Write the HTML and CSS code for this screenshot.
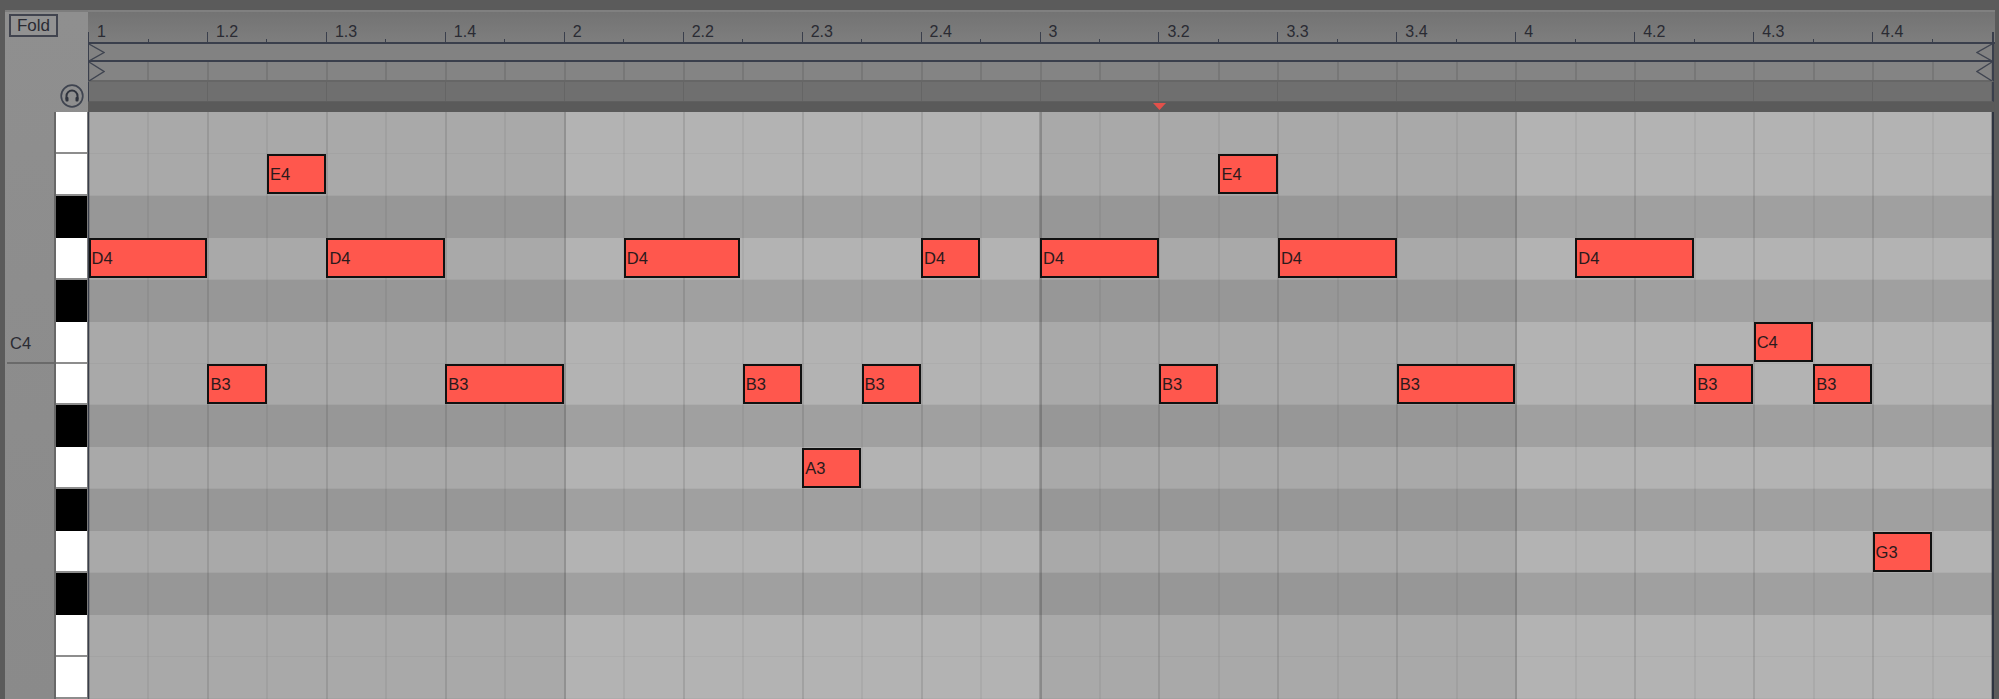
FILE: index.html
```html
<!DOCTYPE html>
<html lang="en">
<head>
<meta charset="utf-8">
<title>MIDI Note Editor</title>
<link rel="stylesheet" href="styles.css">
</head>
<body>
<div class="frame">
  <div class="panel">
    <aside class="side">
      <div class="side-head">
        <button class="fold" type="button">Fold</button>
        <svg class="phones" width="24" height="24" viewBox="0 0 24 24" fill="none" aria-hidden="true">
          <circle cx="12" cy="12" r="10.8" stroke="#3f4450" stroke-width="1.7"/>
          <path d="M6.5 15.5V12a5.5 5.5 0 0 1 11 0V15.5" stroke="#2f333d" stroke-width="2"/>
          <rect x="5.5" y="13" width="3" height="4.5" rx="1" fill="#2f333d"/>
          <rect x="15.5" y="13" width="3" height="4.5" rx="1" fill="#2f333d"/>
        </svg>
      </div>
      <div class="side-body">
        <div class="labels">
          <div class="octave">C4</div>
        </div>
        <div class="keys">
          <div class="key white"></div>
          <div class="key white"></div>
          <div class="key black"></div>
          <div class="key white"></div>
          <div class="key black"></div>
          <div class="key white"></div>
          <div class="key white"></div>
          <div class="key black"></div>
          <div class="key white"></div>
          <div class="key black"></div>
          <div class="key white"></div>
          <div class="key black"></div>
          <div class="key white"></div>
          <div class="key white"></div>
        </div>
      </div>
    </aside>
    <main class="main">
      <div class="ruler">
        <div class="beat">1</div><div class="beat">1.2</div><div class="beat">1.3</div><div class="beat">1.4</div>
        <div class="beat">2</div><div class="beat">2.2</div><div class="beat">2.3</div><div class="beat">2.4</div>
        <div class="beat">3</div><div class="beat">3.2</div><div class="beat">3.3</div><div class="beat">3.4</div>
        <div class="beat">4</div><div class="beat">4.2</div><div class="beat">4.3</div><div class="beat">4.4</div>
        <div class="ruler-end"></div>
      </div>
      <div class="strip loop">
        <svg width="16" height="17" viewBox="0 0 16 17" fill="none" aria-hidden="true"><path d="M0 0L15 8.5L0 17" stroke="#3f4450" stroke-width="1.3"/></svg>
        <svg width="16" height="17" viewBox="0 0 16 17" fill="none" aria-hidden="true"><path d="M16 0L1 8.5L16 17" stroke="#3f4450" stroke-width="1.3"/></svg>
      </div>
      <div class="strip start">
        <svg width="16" height="19" viewBox="0 0 16 19" fill="none" aria-hidden="true"><path d="M0 0L15 9.5L0 19" stroke="#3f4450" stroke-width="1.3"/></svg>
        <svg width="16" height="19" viewBox="0 0 16 19" fill="none" aria-hidden="true"><path d="M16 0L1 9.5L16 19" stroke="#3f4450" stroke-width="1.3"/></svg>
      </div>
      <div class="strip scrub"></div>
      <div class="band">
        <svg class="marker" width="13" height="7" viewBox="0 0 13 7" aria-hidden="true"><path d="M0 0H13L6.5 7Z" fill="#e2504a"/></svg>
      </div>
      <div class="roll">
        <div class="row"></div>
        <div class="row"></div>
        <div class="row dark"></div>
        <div class="row"></div>
        <div class="row dark"></div>
        <div class="row"></div>
        <div class="row"></div>
        <div class="row dark"></div>
        <div class="row"></div>
        <div class="row dark"></div>
        <div class="row"></div>
        <div class="row dark"></div>
        <div class="row"></div>
        <div class="row"></div>

        <div class="note" style="--s:3;--r:1;--l:1">E4</div>
        <div class="note" style="--s:19;--r:1;--l:1">E4</div>

        <div class="note" style="--s:0;--r:3;--l:2">D4</div>
        <div class="note" style="--s:4;--r:3;--l:2">D4</div>
        <div class="note" style="--s:9;--r:3;--l:1.96">D4</div>
        <div class="note" style="--s:14;--r:3;--l:1">D4</div>
        <div class="note" style="--s:16;--r:3;--l:2">D4</div>
        <div class="note" style="--s:20;--r:3;--l:2">D4</div>
        <div class="note" style="--s:25;--r:3;--l:2">D4</div>

        <div class="note" style="--s:28;--r:5;--l:1">C4</div>

        <div class="note" style="--s:2;--r:6;--l:1">B3</div>
        <div class="note" style="--s:6;--r:6;--l:2">B3</div>
        <div class="note" style="--s:11;--r:6;--l:1">B3</div>
        <div class="note" style="--s:13;--r:6;--l:1">B3</div>
        <div class="note" style="--s:18;--r:6;--l:1">B3</div>
        <div class="note" style="--s:22;--r:6;--l:2">B3</div>
        <div class="note" style="--s:27;--r:6;--l:1">B3</div>
        <div class="note" style="--s:29;--r:6;--l:1">B3</div>

        <div class="note" style="--s:12;--r:8;--l:1">A3</div>
        <div class="note" style="--s:30;--r:10;--l:1">G3</div>
      </div>
    </main>
  </div>
</div>
</body>
</html>
```
FILE: styles.css
```css
* { box-sizing: border-box; }

html, body { margin: 0; height: 100%; }

body {
  overflow: hidden;
  font-family: "Liberation Sans", Arial, sans-serif;
  color: #2a2b33;
}

.frame {
  width: 1999px;
  height: 699px;
  padding: 10px 4px 0 5px;
  background: #5b5b5b;
}

.panel {
  display: grid;
  grid-template-columns: 83px 1fr;
  height: 689px;
}

/* left column */
.side {
  display: flex;
  flex-direction: column;
  background: linear-gradient(#8f8f8f, #8a8a8a);
  border-top: 2px solid #7d7d7d;
}

.side-head {
  height: 100px;
  flex: none;
  display: flex;
  flex-direction: column;
  justify-content: space-between;
  align-items: flex-start;
  padding: 2px 0 4px 4px;
}

.fold {
  width: 49px;
  height: 23px;
  padding: 0;
  border: 2px solid #41444f;
  border-radius: 0;
  background: #929292;
  color: #2a2b33;
  font: 17px/19px "Liberation Sans", Arial, sans-serif;
  text-align: center;
}

.phones {
  align-self: flex-end;
  margin-right: 4px;
}

.side-body {
  flex: 1;
  display: flex;
  min-height: 0;
}

.labels {
  width: 51px;
  padding-left: 2px;
  border-right: 2px solid #686868;
}

.octave {
  height: 252px;
  padding: 222px 0 0 3px;
  border-bottom: 2px solid #6a6a6a;
  font-size: 16.5px;
  line-height: 18px;
}

.keys {
  width: 32px;
  display: grid;
  grid-template-rows: repeat(14, 1fr);
  background: #7a7a7a;
}

.key { width: 31px; }
.key.white { background: #fff; border-bottom: 2px solid #8d8d8d; }
.key.black { background: #000; }

/* ruler and strips */
.main {
  display: flex;
  flex-direction: column;
  min-width: 0;
  padding-right: 1px;
}

.ruler {
  display: flex;
  flex: none;
  height: 34px;
  border-top: 2px solid #808080;
  border-bottom: 2px solid #3a3f4c;
  background: linear-gradient(#737373, #7e7e7e);
  margin-right: -1px;
}

.beat {
  flex: 0 0 118.94px;
  padding: 11px 0 0 9px;
  font-size: 16px;
  line-height: 18px;
  background:
    linear-gradient(#3a3f4c, #3a3f4c) left bottom / 1px 10px no-repeat,
    linear-gradient(#3a3f4c, #3a3f4c) 59.5px bottom / 1px 3px no-repeat;
}

.ruler-end {
  width: 2px;
  height: 10px;
  align-self: flex-end;
  margin-left: 1px;
  background: #3a3f4c;
}

.strip {
  flex: none;
  display: flex;
  justify-content: space-between;
  border-left: 1px solid #3a3f4c;
  border-right: 2px solid #3a3f4c;
  background-position: -1px 0;
}

.loop {
  height: 18px;
  background-color: #828282;
  border-bottom: 2px solid #3a3f4c;
}

.start {
  height: 20px;
  background-color: #848484;
  border-bottom: 2px solid #666;
  background-image:
    repeating-linear-gradient(90deg, #777 0 2px, transparent 2px 59.47px);
}

.scrub {
  height: 20px;
  background-color: #6f6f6f;
  border-bottom: 1px solid #5f5f5f;
  background-image:
    repeating-linear-gradient(90deg, #656565 0 1px, transparent 1px 118.94px);
}

.band {
  flex: none;
  height: 10px;
  background: #5a5a5a;
  padding: 1px 0 0 1065px;
  margin-right: -1px;
  display: flex;
  align-items: flex-start;
}

/* note grid */
.roll {
  position: relative;
  flex: 1;
  display: grid;
  grid-template-rows: repeat(14, 1fr);
  min-height: 0;
  border-left: 1px solid #3a3f4c;
  border-right: 2px solid #2f3440;
  background-color: #a9a9a9;
  background-position: -1px 0;
  background-image:
    repeating-linear-gradient(90deg, rgba(0,0,0,.1) 0 2px, transparent 2px 475.75px),
    repeating-linear-gradient(90deg, rgba(0,0,0,.05) 0 2px, transparent 2px 118.94px),
    repeating-linear-gradient(90deg, rgba(0,0,0,.05) 0 2px, transparent 2px 59.47px),
    repeating-linear-gradient(90deg, transparent 0 475.75px, rgba(255,255,255,.12) 475.75px 951.5px);
}

.row { border-bottom: 1px solid rgba(0,0,0,.03); }
.row.dark { background: rgba(0,0,0,.1); border-bottom: 0; }

.note {
  position: absolute;
  left: calc(var(--s) * 59.47px - .5px);
  top: calc(var(--r) * 41.93px + .3px);
  width: calc(var(--l) * 59.47px - .3px);
  height: 40px;
  padding: 0 0 0 1px;
  border: 2px solid #111;
  background: #ff574d;
  font-size: 16.5px;
  line-height: 36px;
  color: #2b1a1c;
}
```
